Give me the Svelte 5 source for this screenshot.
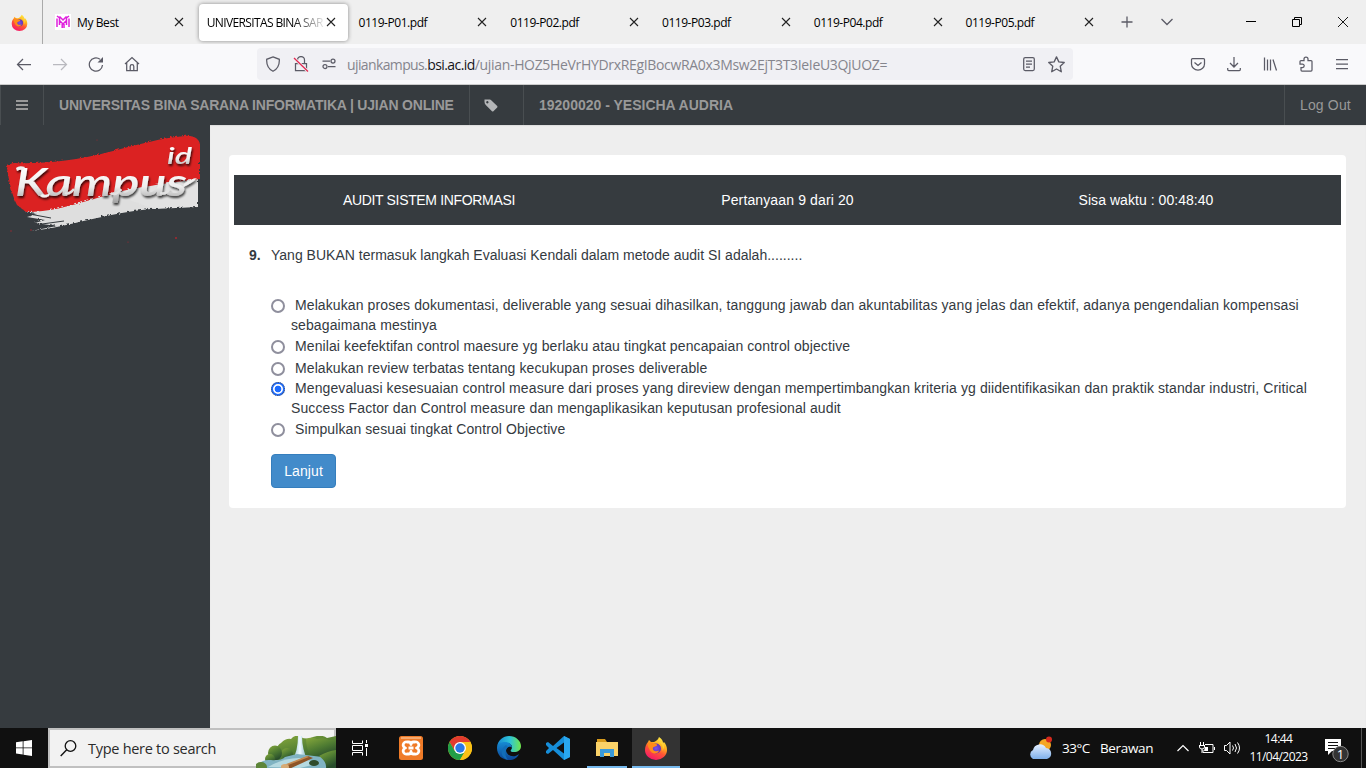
<script>
  const pdfTabs = ['0119-P01.pdf', '0119-P02.pdf', '0119-P03.pdf', '0119-P04.pdf', '0119-P05.pdf'];
  const answers = [
    { lines: ['Melakukan proses dokumentasi, deliverable yang sesuai dihasilkan, tanggung jawab dan akuntabilitas yang jelas dan efektif, adanya pengendalian kompensasi', 'sebagaimana mestinya'], h: 41 },
    { lines: ['Menilai keefektifan control maesure yg berlaku atau tingkat pencapaian control objective'], h: 22 },
    { lines: ['Melakukan review terbatas tentang kecukupan proses deliverable'], h: 20 },
    { lines: ['Mengevaluasi kesesuaian control measure dari proses yang direview dengan mempertimbangkan kriteria yg diidentifikasikan dan praktik standar industri, Critical', 'Success Factor dan Control measure dan mengaplikasikan keputusan profesional audit'], h: 41 },
    { lines: ['Simpulkan sesuai tingkat Control Objective'], h: 20 }
  ];
  let selected = $state(3);
</script>

{#snippet firefox(size, id)}
  <svg width={size} height={size} viewBox="0 0 24 24">
    <defs>
      <linearGradient id={id + 'a'} x1=".8" y1="0" x2=".3" y2="1"><stop offset="0" stop-color="#fff44f" /><stop offset=".35" stop-color="#ffb21d" /><stop offset=".6" stop-color="#ff5634" /><stop offset="1" stop-color="#f5156c" /></linearGradient>
      <radialGradient id={id + 'b'}><stop offset="0" stop-color="#7654ec" /><stop offset="1" stop-color="#6133b5" /></radialGradient>
    </defs>
    <path d="M15 1c3 2 4 4 4 6l1-1c2 2 3 5 3 8a11 10 0 0 1-22 0c0-3 1-6 3-8l1-2 2 2h3c2-1 4-2 5-5z" fill="url(#{id}a)" />
    <circle cx="12" cy="12.5" r="5" fill="url(#{id}b)" />
    <path d="M4 7c2-1 4-1 5 0l3 1c2 1 1 2-1 2.500l-2 1c-1 3 3 5 6 3-1 4-7 4-9 0C5 12 3 10 4 7z" fill="#ff8b19" />
    <path d="M14 6c4 1 6 5 4 9 3-3 3-8-1-10z" fill="#ffd23a" opacity=".8" />
  </svg>
{/snippet}

{#snippet cross()}
  <svg class="cross" width="10" height="10" viewBox="0 0 10 10"><path d="M1 1l8 8M9 1L1 9" /></svg>
{/snippet}

<div class="screen">
  <div class="tabs">
    <div class="pinned">{@render firefox(17, 'p')}</div>
    <div class="tab first">
      <svg width="16" height="16" viewBox="0 0 16 16"><rect width="16" height="16" fill="#fff" /><path d="M2 13V4.500M4.500 11V2.500M4.500 2.500L8 6l3.500-3.500M11.500 2.500V11M14 4.500V13M2 2l2 1.500M14 2l-2 1.500M4.500 6.500L8 10l3.500-3.500M7.200 10v4M9 10v4" fill="none" stroke="#df20dc" stroke-width="1.500" /></svg>
      <span class="title">My Best</span>{@render cross()}
    </div>
    <div class="tab"><div class="active"><span class="title fade">UNIVERSITAS BINA SAR</span>{@render cross()}</div></div>
    {#each pdfTabs as name}
      <div class="tab"><span class="title pdf">{name}</span>{@render cross()}</div>
    {/each}
    <div class="after">
      <svg width="12" height="12" viewBox="0 0 12 12"><path d="M6 .5v11M.5 6h11" /></svg>
      <svg width="12" height="12" viewBox="0 0 12 12"><path d="M.5 3L6 8.500 11.500 3" /></svg>
    </div>
    <div class="window">
      <svg width="10" height="10" viewBox="0 0 10 10"><path d="M0 4.500h10" /></svg>
      <svg width="10" height="10" viewBox="0 0 10 10"><path d="M.5 2.500h7v7h-7zM2.500 2.500v-2h7v7h-2" /></svg>
      <svg width="10" height="10" viewBox="0 0 10 10"><path d="M0 0l10 10M10 0L0 10" stroke-width=".9" /></svg>
    </div>
  </div>

  <div class="toolbar">
    <div class="nav">
      <svg width="16" height="16" viewBox="0 0 16 16"><path d="M15 8.500H1.500M7 3L1.500 8.500 7 14" /></svg>
      <svg class="off" width="16" height="16" viewBox="0 0 16 16"><path d="M1 8.500h13.500M9 3l5.500 5.500L9 14" /></svg>
      <svg width="16" height="16" viewBox="0 0 16 16"><path d="M14.500 9A6.600 6.600 0 1 1 12 3.300" /><path d="M15 1v5.500H9.500z" fill="#5b5b66" stroke="none" /></svg>
      <svg width="16" height="16" viewBox="0 0 16 16"><path d="M1 8l7-6.500L15 8M2.700 7v7.500h10.600V7M6.200 14.500v-4a1.800 1.800 0 0 1 3.600 0v4" /></svg>
    </div>
    <div class="address">
      <svg width="16" height="16" viewBox="0 0 16 16"><path d="M8 .8l6.300 2.500c.3 5-1.500 9.500-6.300 12C3.200 12.800 1.400 8.300 1.700 3.300z" /></svg>
      <svg width="16" height="16" viewBox="0 0 16 16"><path d="M2.500 7.500h11v7h-11zM4.500 7V4a3.500 3.500 0 0 1 7 0v3" /><path d="M1 2l14 13.500" stroke="#f9f9fb" stroke-width="3" /><path d="M1 2l14 13.500" stroke="#e22850" /></svg>
      <svg width="16" height="16" viewBox="0 0 16 16"><circle cx="12" cy="5" r="2" /><circle cx="4" cy="10.500" r="2" /><path d="M1.500 5H9M7 10.500h7.500" /></svg>
      <span class="url"><span class="sub">ujiankampus.</span><b>bsi.ac.id</b><span class="path">/ujian-HOZ5HeVrHYDrxREgIBocwRA0x3Msw2EjT3T3IeIeU3QjUOZ=</span></span>
      <svg width="14" height="16" viewBox="0 0 14 16"><rect x="1.700" y="1.500" width="10.600" height="13" rx="1.500" /><path d="M4 5h6M4 8h6M4 11h4" /></svg>
      <svg width="17" height="17" viewBox="0 0 16 16"><path d="M8 .8l2.200 4.700 5.100.6-3.800 3.500 1 5.200L8 12.200l-4.500 2.600 1-5.200L.7 6.100l5.100-.6z" stroke-linejoin="round" /></svg>
    </div>
    <div class="tools">
      <svg width="16" height="16" viewBox="0 0 16 16"><path d="M2.500 2.500h11q1 0 1 1V8a6.500 6 0 0 1-13 0V3.500q0-1 1-1zM4.500 6.500L8 9.500l3.500-3" /></svg>
      <svg width="16" height="16" viewBox="0 0 16 16"><path d="M8 1v10M4 7l4 4 4-4M1.700 12v1.500q0 1 1 1h10.600q1 0 1-1V12" /></svg>
      <svg width="16" height="16" viewBox="0 0 16 16"><path d="M2.500 1.500v13M5.500 3.500v11M8.500 3.500v11M11 3.500l3.500 11" /></svg>
      <svg width="16" height="16" viewBox="0 0 16 16"><path d="M6 4.500V3a2 2 0 0 1 4 0v1.500h3q1 0 1 1V14q0 1-1 1H4q-1 0-1-1v-2.500h1.500a1.700 1.700 0 0 0 0-3.400H2V5.500q0-1 1-1z" /></svg>
      <svg width="16" height="16" viewBox="0 0 16 16"><path d="M2 3.500h12M2 8h12M2 12.500h12" /></svg>
    </div>
  </div>

  <div class="bar">
    <div class="cell burger"><svg width="12" height="12" viewBox="0 0 12 12"><path d="M0 2h12M0 6h12M0 10h12" stroke="#999" stroke-width="1.800" /></svg></div>
    <div class="cell site"><span>UNIVERSITAS BINA SARANA INFORMATIKA | UJIAN ONLINE</span></div>
    <div class="cell tag"><svg width="14" height="14" viewBox="0 0 14 14"><path fill-rule="evenodd" d="M.5 1.500h5.300q.8 0 1.400.7l6 5.800q.6.700 0 1.400L9.400 13.200q-.7.600-1.400 0L2 7.300Q.5 5.800.5 4zM3.300 3a1.200 1.200 0 1 0 .1 0z" fill="#b4b6b8" /></svg></div>
    <div class="cell user">19200020 - YESICHA AUDRIA</div>
    <div class="cell logout">Log Out</div>
  </div>

  <div class="body">
    <aside>
      <svg width="210" height="120" viewBox="0 0 210 120">
        <defs>
          <linearGradient id="ink" x1="0" y1="0" x2="0" y2="1"><stop offset=".2" stop-color="#fff" /><stop offset=".62" stop-color="#eee" /><stop offset="1" stop-color="#9a9a9a" /></linearGradient>
          <filter id="rough"><feTurbulence baseFrequency=".3" numOctaves="2" seed="4" /><feDisplacementMap in="SourceGraphic" scale="3" /></filter>
          <filter id="shade" x="-10%" y="-20%" width="120%" height="150%"><feDropShadow dx="1" dy="2" stdDeviation="1.300" flood-color="#000" flood-opacity=".75" /></filter>
        </defs>
        <g filter="url(#rough)">
          <path d="M24 86C50 79 76 73 106 66c30-7 58-17 91-16v31c-42-1-77 5-110 13-18 4-37 9-57 11l26-5-22-3 10-3-18-3 10-3z" fill="#dedede" />
          <path d="M6 42q2-5 8-5C40 38 75 35 108 26 135 19 160 12 184 10c8-1 15 3 15 9v34c-30 3-59 8-88 15-32 8-55 18-86 18l-9-7C10 67 8 54 6 42z" fill="#db2224" />
          <path d="M112 68q20-7 40-8l45-6v27l-44 2z" fill="#e2e2e2" />
        </g>
        <path d="M30 104l25-4M42 99l22-3M24 88l27 5" stroke="#343a3e" stroke-width="1" />
        <g fill="#a72831"><circle cx="176" cy="113" r="1" /><circle cx="128" cy="117" r=".6" /><circle cx="31" cy="105" r=".8" /><circle cx="11" cy="106" r=".7" /><circle cx="97" cy="15" r=".5" /></g>
        <g font-family="Lato, sans-serif" font-style="italic" font-weight="600" fill="url(#ink)" filter="url(#shade)">
          <text x="15" y="71" font-size="38" textLength="172" lengthAdjust="spacingAndGlyphs">Kampus</text>
          <text x="167" y="39" font-size="22" textLength="25" lengthAdjust="spacingAndGlyphs">id</text>
          <path d="M16 43q3-3 9-1l-2 3q-3-1-6 1zM184 59q6-5 13-6-6 6-14 9zM42 69q4 2 8-1l-1 3q-5 3-9 0z" fill="#f1f1f1" />
          <path d="M65 68q4 2 9-4M111 68q5 3 10-4M160 68q5 2 9-3" fill="none" stroke="#e2e2e2" stroke-width="2.500" />
        </g>
      </svg>
    </aside>
    <main>
      <section>
        <header><span>AUDIT SISTEM INFORMASI</span><span>Pertanyaan 9 dari 20</span><span>Sisa waktu : 00:48:40</span></header>
        <div class="question"><b>9.</b><span>Yang BUKAN termasuk langkah Evaluasi Kendali dalam metode audit SI adalah.........</span></div>
        <div class="answers">
          {#each answers as a, i}
            <label style="height:{a.h}px">
              <input type="radio" name="jawaban" checked={selected === i} onchange={() => (selected = i)} />
              <i class:on={selected === i}></i>
              <div>{#each a.lines as line, n}<p class:lead={n === 0}>{line}</p>{/each}</div>
            </label>
          {/each}
        </div>
        <button>Lanjut</button>
      </section>
    </main>
  </div>

  <div class="taskbar">
    <div class="start"><svg width="16" height="16" viewBox="0 0 16 16"><path d="M0 2.300l6.700-1v6.200H0zM7.500 1.200L16 0v7.500H7.500zM0 8.300h6.700v6.300l-6.700-1zM7.500 8.300H16V16l-8.500-1.300z" fill="#fff" /></svg></div>
    <div class="search">
      <svg width="17" height="17" viewBox="0 0 17 17"><circle cx="10.500" cy="6" r="5.300" fill="none" stroke="#111" stroke-width="1.300" /><path d="M6.700 9.800L.7 16" stroke="#111" stroke-width="1.400" /></svg>
      <span>Type here to search</span>
      <svg class="scene" width="80" height="32" viewBox="0 0 80 32">
        <defs><linearGradient id="leaf" x1="0" y1="0" x2=".5" y2="1"><stop offset="0" stop-color="#87a93c" /><stop offset=".55" stop-color="#4e7b32" /><stop offset="1" stop-color="#284d2c" /></linearGradient><linearGradient id="water"><stop offset="0" stop-color="#8db9c7" /><stop offset=".5" stop-color="#f0fbff" /><stop offset="1" stop-color="#6ea4b5" /></linearGradient></defs>
        <path d="M22 28V14q-2-4 3-7 5-5 10-4 4-5 9-2 8 3 13 0 9-3 14 1l9-2v32H22z" fill="url(#leaf)" />
        <path d="M42 0h4q0 14 6 25H36q6-10 6-25z" fill="url(#water)" />
        <path d="M50 3q6-3 11 0 8-2 12 1h7v18l-24 1q-6-10-6-20z" fill="url(#leaf)" />
        <circle cx="31" cy="18" r="6" fill="url(#leaf)" /><ellipse cx="19" cy="17" rx="7" ry="7.500" fill="url(#leaf)" /><circle cx="14" cy="23" r="5" fill="url(#leaf)" />
        <path d="M0 32q4-9 15-8 10 1 14-3l12-3 34 4 5 10z" fill="#80b3c2" /><path d="M12 31q15-9 31-9l21 5-20 5z" fill="#b5d9e0" />
        <path d="M25 31l27-11 5 2-26 12z" fill="#8d5426" /><path d="M25 30l26-10 2 1-26 10z" fill="#c38a51" /><ellipse cx="29" cy="31" rx="4" ry="3" fill="#d6ab76" />
        <ellipse cx="58" cy="27" rx="5" ry="3" fill="#304c2b" /><path d="M63 20q9-5 17-6v18H70q1-6-7-12z" fill="url(#leaf)" /><ellipse cx="5" cy="31" rx="6" ry="5" fill="#5d8539" />
      </svg>
    </div>
    <div class="apps">
      <div class="app task"><svg width="18" height="18" viewBox="0 0 18 18"><path d="M1.500 1.500v3h10v-3M1.500 16.500v-3h10v3M1.500 6.500h10v5h-10zM15.500 1v3M15.500 9v8" fill="none" stroke="#fff" stroke-width="1" /><rect x="14" y="5" width="3" height="3" fill="#fff" /></svg></div>
      <div class="app"><svg width="24" height="24" viewBox="0 0 24 24"><rect width="24" height="24" rx="2.500" fill="#ef7b28" /><path d="M2 1h20v2H2z" fill="#f6aa70" /><path d="M9.500 6H8a3 3 0 0 0-1.500 6A3 3 0 0 0 8 18h1.500Q12 18 12 15.500 12 18 14.500 18H16a3 3 0 0 0 1.500-6A3 3 0 0 0 16 6h-1.500Q12 6 12 8.500 12 6 9.500 6zM9.500 12h5" fill="none" stroke="#fff" stroke-width="2.800" stroke-linejoin="round" /></svg></div>
      <div class="app"><svg width="24" height="24" viewBox="0 0 24 24"><circle cx="12" cy="12" r="12" fill="#fbc116" /><path d="M1.600 6A12 12 0 0 1 22.400 6H12l-5.200 9z" fill="#e33b2e" /><path d="M1.600 6A12 12 0 0 0 12 24l5.200-9H6.800z" fill="#229e48" /><path d="M12 24a12 12 0 0 0 10.400-18H12l5.200 9z" fill="#fbc116" /><circle cx="12" cy="12" r="6" fill="#fff" /><circle cx="12" cy="12" r="4.700" fill="#2c78e8" /></svg></div>
      <div class="app"><svg width="24" height="24" viewBox="0 0 24 24"><defs><linearGradient id="e1"><stop offset="0" stop-color="#1687d4" /><stop offset=".55" stop-color="#2fc5d6" /><stop offset="1" stop-color="#70e64b" /></linearGradient><linearGradient id="e2" x1="0" y1="0" x2="0" y2="1"><stop offset="0" stop-color="#168bd3" /><stop offset="1" stop-color="#0c4597" /></linearGradient></defs><path d="M0 11C1 4 6 0 12 0c7 0 12 5 12 10 0 4-3 6-7 6-3 0-4-1-3-2 3-4-1-7-4-7-5 0-10 2-10 4z" fill="url(#e1)" /><path d="M0 12C0 8 3 6 8 6c4 0 7 2 7 6-1-2-5-2-6 2 0 5 7 9 13 4-2 4-5 6-10 6C5 24 0 19 0 12z" fill="url(#e2)" /><path d="M9 9c-7 5-5 13 2 15-3-4-4-9 0-13z" fill="#126db8" /></svg></div>
      <div class="app"><svg width="24" height="24" viewBox="0 0 24 24"><path d="M18 0l6 3v18l-6 3L7 14l-5 4-2-1v-2l3-3-3-3V7l2-1 5 4zM18 6.500L10.500 12l7.500 5.500z" fill="#168ed9" fill-rule="evenodd" /><path d="M18 0l6 3v18l-6 3z" fill="#29a7ef" /></svg></div>
      <div class="app open"><svg width="22" height="20" viewBox="0 0 22 20"><path d="M1 1h8l2 3h10v14H1z" fill="#d89b1c" /><path d="M0 4h22v14H0z" fill="#fad268" /><path d="M4 19v-8h14v8h-4v-4H8v4z" fill="#3a9ad9" /></svg></div>
      <div class="app current">{@render firefox(24, 't')}</div>
    </div>
    <div class="weather">
      <svg width="26" height="24" viewBox="0 0 26 24"><defs><linearGradient id="cloud" x1="0" y1="0" x2="0" y2="1"><stop offset="0" stop-color="#e5f0ff" /><stop offset="1" stop-color="#7eafea" /></linearGradient></defs><circle cx="18" cy="9" r="6" fill="#f5a623" /><circle cx="22" cy="3.500" r="3" fill="#d62a1e" /><path d="M6 23a5 5 0 0 1 0-9 7 7 0 0 1 13-2 5.600 5.600 0 0 1 1 11z" fill="url(#cloud)" /></svg>
      <span class="temp">33°C</span><span class="cond">Berawan</span>
    </div>
    <div class="tray">
      <svg width="12" height="8" viewBox="0 0 12 8"><path d="M.5 7L6 1.500 11.500 7" fill="none" stroke="#fff" stroke-width="1.200" /></svg>
      <svg width="16" height="12" viewBox="0 0 16 12"><path d="M6 2.500h8v8H4V8M15.500 5v3M1.500 0v3M4.500 0v3M0 3.500h6M.5 3.500V5a2.500 2 0 0 0 5 0V3.500M3 7v4" fill="none" stroke="#fff" /><path d="M6 5h3v4H5z" fill="#fff" /></svg>
      <svg width="17" height="14" viewBox="0 0 17 14"><path d="M.5 4.500h2L6 1v12L2.500 9.500h-2zM8.500 4.500q2 2.500 0 5M11 3q3 4 0 8M13.500 1.500q4 5.500 0 11" fill="none" stroke="#fff" /></svg>
    </div>
    <div class="clock"><span class="time">14:44</span><span class="date">11/04/2023</span></div>
    <div class="notice"><svg width="24" height="26" viewBox="0 0 24 26"><path d="M0 1h16v12H7l-4 4v-4H0z" fill="#fff" /><path d="M3 4.500h10M3 7.500h10M3 10.500h7" stroke="#111" /><circle cx="15.500" cy="16" r="7.700" fill="#333" stroke="#888" /><text x="15.500" y="20.500" text-anchor="middle" fill="#fff" font-family="Open Sans, sans-serif" font-size="13">1</text></svg></div>
    <div class="edge"></div>
  </div>
</div>

<style>
  :global(body) { margin: 0; overflow: hidden; }
  * { box-sizing: border-box; }
  svg { display: block; flex: none; }
  .screen { width: 1366px; height: 768px; display: flex; flex-direction: column; background: #eee; font: 14px/20px "Liberation Sans", Arial, sans-serif; color: #343a3f; overflow: hidden; }
  .tabs { height: 44px; flex: none; display: flex; align-items: center; background: #efefef; color: #000; font: 12px/16px "Open Sans", sans-serif; }
  .pinned { width: 43px; height: 44px; border-right: 1px solid #aaa; padding-left: 11px; display: flex; align-items: center; margin-right: 3px; }
  .tab { width: 151.750px; height: 44px; flex: none; display: flex; align-items: center; padding: 0 14px 0 9px; }
  .first svg:first-child { margin-right: 6px; }
  .tab:has(.active) { padding: 0 0 0 1px; }
  .active { width: 149px; height: 37px; display: flex; align-items: center; padding: 0 12px 0 8px; background: #fff; border-radius: 4px; box-shadow: 0 0 4px #888; }
  .title { white-space: nowrap; letter-spacing: -.4px; margin-right: auto; padding-top: 2px; }
  .pdf { letter-spacing: -.46px; }
  .fade { width: 118px; letter-spacing: -.63px; mask-image: linear-gradient(90deg, #000 85px, transparent 120px); }
  .cross path { fill: none; stroke: #222; stroke-width: 1.100; }
  .after { display: flex; gap: 28px; margin-left: 13px; }
  .after path { fill: none; stroke: #5b5b66; stroke-width: 1.300; }
  .window { display: flex; gap: 36px; margin: 0 18px 0 auto; }
  .window path { fill: none; stroke: #000; }
  .toolbar { height: 41px; flex: none; background: #f9f9fb; border-bottom: 1px solid #ccc; display: flex; align-items: center; }
  .toolbar path, .toolbar rect, .toolbar circle { fill: none; stroke: #5b5b66; stroke-width: 1.250; }
  .toolbar path[fill] { fill: #5b5b66; stroke: none; }
  .toolbar path[stroke="#f9f9fb"] { stroke: #f0f0f4; stroke-width: 3; }
  .toolbar path[stroke="#e22850"] { stroke: #e22850; }
  .nav { width: 257px; display: flex; gap: 20px; padding-left: 16px; }
  .off { opacity: .4; }
  .address { width: 816px; height: 32px; border-radius: 4px; background: #f0f0f4; display: flex; align-items: center; padding: 0 8px; gap: 12px; }
  .url { width: 663px; margin-left: -2px; padding-top: 2px; font: 14px/20px "Open Sans", sans-serif; color: #85858d; white-space: nowrap; }
  .url b { font-weight: 400; color: #15141a; letter-spacing: -.57px; }
  .sub { letter-spacing: -.62px; }
  .path { letter-spacing: -.33px; }
  .tools { display: flex; gap: 20px; margin: 0 16px 0 auto; }
  .bar { height: 40px; flex: none; background: #363b3f; display: flex; align-items: stretch; color: #999; font-weight: 700; }
  .cell { display: flex; align-items: center; border-right: 1px solid #494e51; white-space: nowrap; }
  .burger { width: 44px; padding-left: 15px; border-left: 1px solid #494e51; }
  .site { width: 426px; padding-left: 15px; letter-spacing: -.2px; }
  .tag { width: 54px; padding-left: 14px; }
  .user { padding-left: 15px; border: 0; }
  .logout { margin-left: auto; width: 82px; padding-left: 15px; border-right: 0; border-left: 1px solid #494e51; font-weight: 400; letter-spacing: .15px; }
  .body { flex: 1; display: flex; min-height: 0; }
  aside { width: 210px; background: #363b3f; }
  main { flex: 1; padding: 30px 20px 0 19px; box-shadow: inset 0 1px 1px #ddd; }
  section { height: 353px; background: #fff; border-radius: 4px; padding: 20px 5px; }
  header { height: 50px; background: #363b3f; color: #fff; display: grid; grid-template-columns: 390px 327px 1fr; align-items: center; text-align: center; }
  header span:first-child { letter-spacing: -.34px; }
  header span:nth-child(2) { letter-spacing: .13px; }
  header span:nth-child(3) { letter-spacing: .05px; }
  .question { display: flex; padding: 20px 0 0 15px; height: 70px; letter-spacing: .01px; }
  .question b { width: 22px; }
  .answers { padding-left: 37px; letter-spacing: .1px; }
  label { display: flex; white-space: nowrap; }
  label input { appearance: none; width: 0; height: 0; margin: 0; }
  label i { width: 14px; height: 14px; margin: 4px 6px 0 0; border: 2px solid #8f8f9d; border-radius: 50%; background: #fff; flex: none; }
  label i.on { border-color: #1c6bff; background: radial-gradient(circle, #1c6bff 3px, #fff 3.700px); outline: 1px dotted #555; outline-offset: -1px; }
  p { margin: 0; }
  .lead { padding-left: 4px; }
  button { display: block; width: 65px; height: 34px; margin: 15px 0 0 37px; border: 1px solid #357ebd; border-radius: 4px; background: #428bca; color: #fff; font: 14px/20px "Liberation Sans", sans-serif; padding: 0; letter-spacing: .1px; }
  .taskbar { height: 40px; flex: none; background: #101010; color: #fff; display: flex; align-items: center; font-family: "Open Sans", sans-serif; }
  .start { width: 48px; padding-left: 16px; }
  .search { width: 288px; height: 40px; border: 2px solid #c0c0c0; background: #f2f2f2; color: #2b2b2b; position: relative; display: flex; align-items: center; gap: 11px; padding-left: 10px; font-size: 14.500px; white-space: nowrap; letter-spacing: -.28px; }
  .search span { padding-top: 2px; }
  .scene { position: absolute; right: -2px; bottom: -2px; }
  .apps { display: flex; height: 40px; }
  .app { width: 49px; height: 40px; display: flex; align-items: center; justify-content: center; }
  .task { width: 50px; padding-right: 2px; }
  .open { background: linear-gradient(#76b9ed, #76b9ed) center bottom / 40px 2px no-repeat; }
  .current { width: 48px; margin-left: 1px; background: linear-gradient(#76b9ed, #76b9ed) bottom / 100% 2px no-repeat, #333; }
  .weather { display: flex; align-items: center; margin-left: 347px; width: 148px; font-size: 13.500px; white-space: nowrap; }
  .temp { width: 38px; margin-left: 9px; letter-spacing: -.5px; }
  .cond { letter-spacing: -.35px; }
  .tray { display: flex; align-items: center; gap: 9.500px; width: 71px; margin-left: 2px; }
  .clock { width: 61px; display: flex; flex-direction: column; align-items: center; font-size: 12px; line-height: 18px; letter-spacing: -.55px; }
  .notice { margin-left: 16px; padding-top: 5px; }
  .edge { width: 1px; height: 40px; background: #555; margin-left: auto; margin-right: 4px; }
</style>
